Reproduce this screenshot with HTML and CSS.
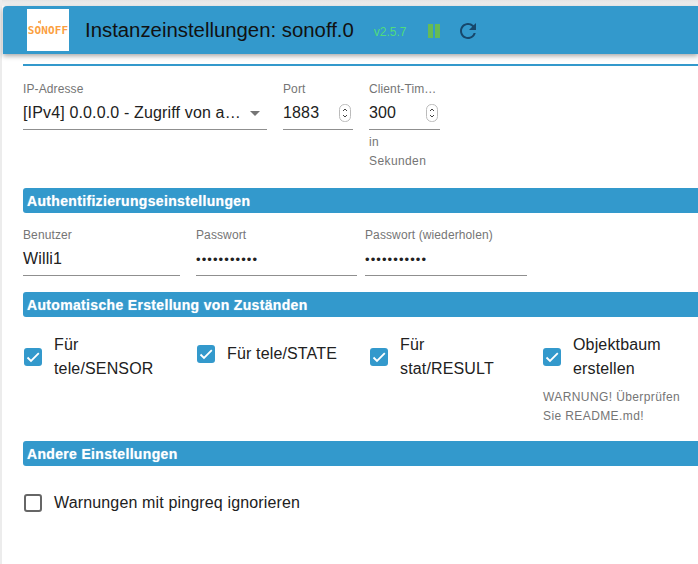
FILE: index.html
```html
<!doctype html>
<html lang="de">
<head>
<meta charset="utf-8">
<title>Instanzeinstellungen: sonoff.0</title>
<link rel="stylesheet" href="styles.css">
</head>
<body>

<div class="page">
    <div class="header">
        <div class="logo">
            <span class="logo-text">SONOFF</span>
            <svg class="logo-wave" width="5" height="6" viewBox="0 0 5 6"><path d="M0 2h1.500L3 .8v4.400L1.500 4H0z" fill="#f7b267"/></svg>
        </div>
        <h1>Instanzeinstellungen: sonoff.0</h1>
        <span class="version">v2.5.7</span>
        <span class="pause"><i></i><i></i></span>
        <svg class="reload" width="24" height="24" viewBox="0 0 24 24"><path d="M17.650 6.350A7.958 7.958 0 0 0 12 4c-4.420 0-7.990 3.580-7.990 8s3.570 8 7.990 8c3.730 0 6.840-2.550 7.730-6h-2.080A5.990 5.990 0 0 1 12 18c-3.310 0-6-2.690-6-6s2.690-6 6-6c1.660 0 3.140.69 4.220 1.780L13 11h7V4l-2.350 2.350z" fill="#17476b"/></svg>
    </div>

    <div class="content">
        <div class="top-line"></div>

        <div class="fields fields-net">
            <div class="field field-ip">
                <label>IP-Adresse</label>
                <div class="value">
                    <span class="value-text">[IPv4] 0.0.0.0 - Zugriff von a…</span>
                    <span class="caret"></span>
                </div>
            </div>
            <div class="field field-port">
                <label>Port</label>
                <div class="value">
                    <span class="value-text">1883</span>
                    <svg class="spin" width="12" height="18" viewBox="0 0 12 18"><rect x=".5" y=".5" width="11" height="17" rx="5" fill="#fff" stroke="#bbb"/><path d="M4 7l2-2 2 2M4 11l2 2 2-2" fill="none" stroke="#444"/></svg>
                </div>
            </div>
            <div class="field field-timeout">
                <label>Client-Tim…</label>
                <div class="value">
                    <span class="value-text">300</span>
                    <svg class="spin" width="12" height="18" viewBox="0 0 12 18"><rect x=".5" y=".5" width="11" height="17" rx="5" fill="#fff" stroke="#bbb"/><path d="M4 7l2-2 2 2M4 11l2 2 2-2" fill="none" stroke="#444"/></svg>
                </div>
                <p class="helper">in<br>Sekunden</p>
            </div>
        </div>

        <h2 class="section section-auth">Authentifizierungseinstellungen</h2>
        <div class="fields fields-auth">
            <div class="field field-user">
                <label>Benutzer</label>
                <div class="value"><span class="value-text">Willi1</span></div>
            </div>
            <div class="field field-pass">
                <label>Passwort</label>
                <div class="value"><span class="value-text dots">•••••••••••</span></div>
            </div>
            <div class="field field-pass2">
                <label>Passwort (wiederholen)</label>
                <div class="value"><span class="value-text dots">•••••••••••</span></div>
            </div>
        </div>

        <h2 class="section section-states">Automatische Erstellung von Zuständen</h2>
        <div class="checks">
            <div class="check">
                <div class="check-row">
                    <span class="box on"><svg width="18" height="18" viewBox="0 0 18 18"><path d="M3.500 9.500l3.500 3.500L14.800 5.200" fill="none" stroke="#fff" stroke-width="1.800"/></svg></span>
                    <span class="check-label">Für tele/SENSOR</span>
                </div>
            </div>
            <div class="check check-mid">
                <div class="check-row">
                    <span class="box on"><svg width="18" height="18" viewBox="0 0 18 18"><path d="M3.500 9.500l3.500 3.500L14.800 5.200" fill="none" stroke="#fff" stroke-width="1.800"/></svg></span>
                    <span class="check-label">Für tele/STATE</span>
                </div>
            </div>
            <div class="check">
                <div class="check-row">
                    <span class="box on"><svg width="18" height="18" viewBox="0 0 18 18"><path d="M3.500 9.500l3.500 3.500L14.800 5.200" fill="none" stroke="#fff" stroke-width="1.800"/></svg></span>
                    <span class="check-label">Für stat/RESULT</span>
                </div>
            </div>
            <div class="check">
                <div class="check-row">
                    <span class="box on"><svg width="18" height="18" viewBox="0 0 18 18"><path d="M3.500 9.500l3.500 3.500L14.800 5.200" fill="none" stroke="#fff" stroke-width="1.800"/></svg></span>
                    <span class="check-label">Objektbaum erstellen</span>
                </div>
                <p class="helper helper-warn">WARNUNG! Überprüfen Sie README.md!</p>
            </div>
        </div>

        <h2 class="section section-other">Andere Einstellungen</h2>
        <div class="check-row check-single">
            <span class="box"></span>
            <span class="check-label check-label-wide">Warnungen mit pingreq ignorieren</span>
        </div>
    </div>
</div>

</body>
</html>
```

FILE: styles.css
```css
html,body{
    margin: 0;
    height: 100%;
}
body{
    width: 698px;
    height: 564px;
    overflow: hidden;
    background-color: #fff;
    font-family: "Liberation Sans", sans-serif;
    color: #212121;
}
.page{
    height: 558px;
    padding-top: 6px;
    background: linear-gradient(#e4e4e4, #f4f4f4 6px, #fff 6px);
    border-left: 2px solid #ececec;
}
.header{
    display: flex;
    align-items: center;
    height: 48px;
    margin-left: 1px;
    border-radius: 4px 0 0 0;
    background-color: #3399cc;
    box-shadow: 0 2px 5px rgba(0,0,0,.35);
}
.logo{
    position: relative;
    display: flex;
    align-items: center;
    justify-content: center;
    width: 42px;
    height: 42px;
    margin-left: 24px;
    background-color: #fff;
}
.logo-text{
    font-family: "DejaVu Sans Mono", monospace;
    font-size: 11px;
    font-weight: bold;
    letter-spacing: .1px;
    color: #fb9f3f;
}
.logo-wave{
    position: absolute;
    top: 10px;
    left: 11px;
}
h1{
    margin: 0 0 0 16px;
    font-size: 20.35px;
    font-weight: normal;
    color: #111;
}
.version{
    margin: 3px 0 0 20px;
    font-size: 12px;
    color: #4fdc7c;
}
.pause{
    display: flex;
    gap: 2px;
    margin: 2px 0 0 21px;
}
.pause i{
    width: 5px;
    height: 14px;
    background-color: #66bb55;
}
.reload{
    margin: 2px 0 0 16px;
}
.content{
    padding: 10px 0 0 21px;
}
.top-line{
    height: 2px;
    background-color: #3399cc;
}
.fields{
    display: flex;
}
.fields-net{
    margin-top: 16px;
    gap: 16px;
}
.fields-auth{
    margin-top: 15px;
}
.field label{
    display: block;
    font-size: 12px;
    line-height: 14px;
    letter-spacing: .11px;
    color: #757575;
}
.value{
    display: flex;
    align-items: center;
    justify-content: space-between;
    height: 28px;
    margin-top: 3px;
    padding-bottom: 2px;
    border-bottom: 1px solid #8f8f8f;
    font-size: 16px;
    letter-spacing: .15px;
}
.value-text{
    white-space: nowrap;
}
.dots{
    font-size: 13px;
    letter-spacing: 1.1px;
}
.field-ip{
    width: 244px;
}
.field-port{
    width: 70px;
}
.field-timeout{
    width: 71px;
}
.field-user{
    width: 157px;
    margin-right: 16px;
}
.field-pass{
    width: 161px;
    margin-right: 8px;
}
.field-pass2{
    width: 162px;
}
.caret{
    width: 0;
    height: 0;
    margin-right: 7px;
    border-left: 5px solid transparent;
    border-right: 5px solid transparent;
    border-top: 5px solid #757575;
}
.spin{
    margin-right: 2px;
}
.helper{
    margin: 3px 0 0;
    font-size: 12px;
    line-height: 19px;
    letter-spacing: .4px;
    color: #757575;
}
.section{
    height: 25px;
    margin: 0;
    padding-left: 4px;
    border-radius: 3px 0 0 3px;
    background-color: #3399cc;
    font-size: 14px;
    font-weight: bold;
    line-height: 26px;
    letter-spacing: .33px;
    text-shadow: 0 0 1px rgba(255,255,255,.6);
    color: #fff;
}
.section-auth{
    margin-top: 17px;
}
.section-states{
    margin-top: 16px;
}
.section-other{
    margin-top: 17px;
}
.checks{
    display: flex;
    margin-top: 16px;
    height: 91px;
}
.check{
    flex: none;
    width: 173px;
}
.check-mid{
    padding-top: 9px;
}
.check-row{
    display: flex;
    align-items: center;
}
.box{
    flex: none;
    width: 18px;
    height: 18px;
    margin: 0 12px 0 1px;
    box-sizing: border-box;
    border: 2px solid #666;
    border-radius: 3px;
}
.box.on{
    border: 0;
    background-color: #3399cc;
}
.box svg{
    display: block;
}
.check-label{
    width: 115px;
    font-size: 16px;
    line-height: 24px;
    letter-spacing: .15px;
}
.check-label-wide{
    width: auto;
}
.helper-warn{
    width: 150px;
    margin: 7px 0 0 1px;
}
.check-single{
    margin-top: 25px;
}
```
